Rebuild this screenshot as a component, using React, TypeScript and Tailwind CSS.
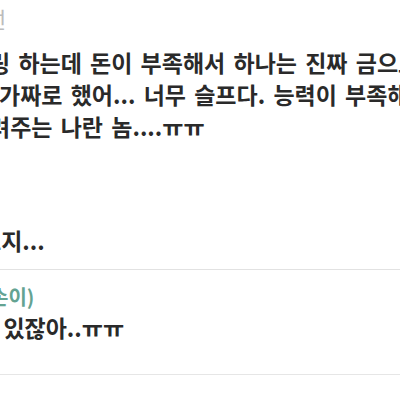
export default function App() {
  const font = { fontFamily: '"Noto Sans CJK KR", "Noto Sans", sans-serif' };
  return (
    <div className="w-[400px] h-[400px] overflow-hidden bg-white" style={font}>
      {/* 첫 번째 댓글 */}
      <div className="h-[34px] leading-[36px] text-[22px] text-[#bcbcbc] whitespace-nowrap -ml-[14px]">
        선
      </div>
      <div className="mt-[12px] text-[23px] leading-[32px] text-[#2a2a2a] font-semibold whitespace-nowrap [word-spacing:3px]">
        <div className="-ml-[11px]">링 하는데 돈이 부족해서 하나는 진짜 금으로</div>
        <div className="-ml-[1px]">가짜로 했어... 너무 슬프다. 능력이 부족해서</div>
        <div className="-ml-[11px]">려주는 나란 놈....ㅠㅠ</div>
      </div>
      <div className="mt-[82px] text-[23px] leading-[32px] text-[#2a2a2a] font-semibold whitespace-nowrap -ml-[20px]">
        보지...
      </div>
      <div className="mt-[13px] border-t border-[#e2e2e2]" />

      {/* 두 번째 댓글 */}
      <div className="mt-[13px] h-[28px] leading-[28px] text-[20px] text-[#64a392] font-semibold whitespace-nowrap -ml-[10px]">
        손이)
      </div>
      <div className="text-[23px] leading-[32px] text-[#2a2a2a] font-semibold whitespace-nowrap -ml-[26px] [word-spacing:3px]">
        다 있잖아..ㅠㅠ
      </div>
      <div className="mt-[31px] border-t border-[#e6e6e6]" />
    </div>
  );
}
